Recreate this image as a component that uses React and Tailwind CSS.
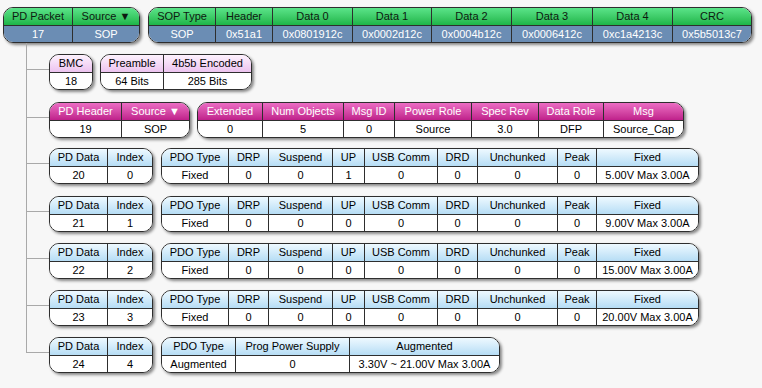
import React from "react";

const variants = {
   green: {
      head: "bg-linear-to-b from-[#5ae489] to-[#1cb548] text-[#0d1a10]",
      body: "bg-[#6b8db4] text-white",
   },
   pink: {
      head: "bg-linear-to-b from-[#ec6cc4] to-[#bf1f8b] text-white",
      body: "bg-white text-black",
   },
   lilac: {
      head: "bg-linear-to-b from-[#fdf2fd] to-[#ecc3ef] text-black",
      body: "bg-white text-black",
   },
   blue: {
      head: "bg-linear-to-b from-[#eef9ff] to-[#b6ddf5] text-black",
      body: "bg-white text-black",
   },
};

// one rounded box, a header row over a value row
const Block = ({ cols, variant }) => {
   const v = variants[variant];
   return (
      <div className="flex shrink-0 rounded-[10px] border border-[#2e2e2e] overflow-hidden shadow-[2px_2px_3px_rgba(0,0,0,0.45)]">
         {cols.map(([head, value, width], i) => (
            <div
               key={i}
               className={`flex flex-col ${i > 0 ? "border-l border-[#2e2e2e]" : ""}`}
               style={{ width: i === 0 || i === cols.length - 1 ? width - 1 : width }}
            >
               <div className={`h-[17px] flex items-center justify-center whitespace-nowrap ${v.head}`}>{head}</div>
               <div className={`h-[17px] border-t border-[#2e2e2e] flex items-center justify-center whitespace-nowrap ${v.body}`}>{value}</div>
            </div>
         ))}
      </div>
   );
};

const pdoHead = ["PDO Type", "DRP", "Suspend", "UP", "USB Comm", "DRD", "Unchunked", "Peak", "Fixed"];
const pdoWidths = [67, 40, 64, 32, 73, 40, 80, 39, 103];

const fixedPdos = [
   { obj: "20", idx: "0", vals: ["Fixed", "0", "0", "1", "0", "0", "0", "0", "5.00V Max 3.00A"] },
   { obj: "21", idx: "1", vals: ["Fixed", "0", "0", "0", "0", "0", "0", "0", "9.00V Max 3.00A"] },
   { obj: "22", idx: "2", vals: ["Fixed", "0", "0", "0", "0", "0", "0", "0", "15.00V Max 3.00A"] },
   { obj: "23", idx: "3", vals: ["Fixed", "0", "0", "0", "0", "0", "0", "0", "20.00V Max 3.00A"] },
];

const Branch = ({ top, last, gap = 8, children }) => (
   <div className="flex">
      <div className="w-[23px] shrink-0 flex flex-col">
         <div className="border-l border-b border-[#a9a9a9]" style={{ height: top + 16 }} />
         {!last && <div className="flex-1 border-l border-[#a9a9a9]" />}
      </div>
      <div className="flex" style={{ paddingTop: top, gap }}>
         {children}
      </div>
   </div>
);

export default function App() {
   return (
      <div
         className="w-[762px] h-[388px] bg-[#f7f7f7] pl-[3px] pt-[7px] text-[11px] leading-none overflow-hidden"
         style={{ fontFamily: '"Liberation Sans", Arial, sans-serif' }}
      >
         <div className="flex gap-[8px]">
            <Block variant="green" cols={[["PD Packet", "17", 69], ["Source ▼", "SOP", 68]]} />
            <Block
               variant="green"
               cols={[
                  ["SOP Type", "SOP", 67],
                  ["Header", "0x51a1", 57],
                  ["Data 0", "0x0801912c", 80],
                  ["Data 1", "0x0002d12c", 79],
                  ["Data 2", "0x0004b12c", 80],
                  ["Data 3", "0x0006412c", 81],
                  ["Data 4", "0xc1a4213c", 80],
                  ["CRC", "0x5b5013c7", 80],
               ]}
            />
         </div>

         <div className="ml-[23px] flex flex-col">
            <Branch top={11} gap={7}>
               <Block variant="lilac" cols={[["BMC", "18", 43]]} />
               <Block variant="lilac" cols={[["Preamble", "64 Bits", 63], ["4b5b Encoded", "285 Bits", 89]]} />
            </Branch>

            <Branch top={12} gap={7}>
               <Block variant="pink" cols={[["PD Header", "19", 72], ["Source ▼", "SOP", 69]]} />
               <Block
                  variant="pink"
                  cols={[
                     ["Extended", "0", 65],
                     ["Num Objects", "5", 81],
                     ["Msg ID", "0", 51],
                     ["Power Role", "Source", 77],
                     ["Spec Rev", "3.0", 67],
                     ["Data Role", "DFP", 65],
                     ["Msg", "Source_Cap", 81],
                  ]}
               />
            </Branch>

            {fixedPdos.map((p, n) => (
               <Branch key={p.obj} top={n === 0 ? 10 : n === 1 ? 12 : 11}>
                  <Block variant="blue" cols={[["PD Data", p.obj, 58], ["Index", p.idx, 46]]} />
                  <Block variant="blue" cols={pdoHead.map((h, i) => [h, p.vals[i], pdoWidths[i]])} />
               </Branch>
            ))}

            <Branch top={11} last>
               <Block variant="blue" cols={[["PD Data", "24", 58], ["Index", "4", 46]]} />
               <Block
                  variant="blue"
                  cols={[
                     ["PDO Type", "Augmented", 74],
                     ["Prog Power Supply", "0", 114],
                     ["Augmented", "3.30V ~ 21.00V Max 3.00A", 151],
                  ]}
               />
            </Branch>
         </div>
      </div>
   );
}
